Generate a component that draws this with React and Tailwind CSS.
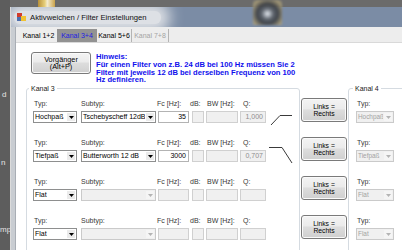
import React from "react";

const rows = [
  { typ: "Hochpaß", sub: "Tschebyscheff 12dB", fc: "35", q: "1,000", on: true, k4: "Hochpaß", link: "M5 26L14 16.5H26" },
  { typ: "Tiefpaß", sub: "Butterworth 12 dB", fc: "3000", q: "0,707", on: true, k4: "Tiefpaß", link: "M3 9.5H16L26 25" },
  { typ: "Flat", sub: "", fc: "", q: "", on: false, k4: "Flat" },
  { typ: "Flat", sub: "", fc: "", q: "", on: false, k4: "Flat" },
];

function Label({ children, className = "" }) {
  return (
    <div className={`h-[9px] whitespace-nowrap text-[7px] leading-[9px] text-[#383838] ${className}`}>
      {children}
    </div>
  );
}

function Combo({ value, on = true, className = "", text = "text-[7px]" }) {
  return (
    <div
      className={`flex h-[12px] border ${
        on ? "border-[#8e8f8f] bg-white text-black" : "border-[#cacaca] bg-[#f0f0f0] text-[#a3a3a3]"
      } ${className}`}
    >
      <span className={`flex-1 overflow-hidden whitespace-nowrap pl-[1px] leading-[10px] ${text}`}>{value}</span>
      <span className={`m-[1px] flex w-[8px] items-center justify-center ${on ? "bg-[#ebebeb]" : "bg-[#f5f5f5]"}`}>
        <svg width="5" height="3" viewBox="0 0 5 3">
          <path d="M0 0H5L2.5 3Z" fill={on ? "#000" : "#b4b4b4"} />
        </svg>
      </span>
    </div>
  );
}

function Field({ value = "", on = false }) {
  return (
    <div
      className={`mt-[3px] h-[12px] border pr-[2px] text-right text-[7px] leading-[10px] ${
        on ? "border-[#b3b3b3] bg-white text-black" : "border-[#d0d0d0] bg-[#f0f0f0] text-[#8d8d8d]"
      }`}
    >
      {value}
    </div>
  );
}

function WinButton({ children, className = "" }) {
  return (
    <div
      className={`flex shrink-0 flex-col items-center justify-center rounded-[3px] border border-[#7a7a7a] bg-[linear-gradient(#f3f3f3,#ebebeb_45%,#dddddd_50%,#cfcfcf)] text-black shadow-[inset_0_0_0_1px_#fafafa] ${className}`}
    >
      {children}
    </div>
  );
}

function FilterRow({ row }) {
  return (
    <div className="mb-[15px] flex h-[24px]">
      <div className="w-[44px] shrink-0">
        <Label className="pl-[1px]">Typ:</Label>
        <Combo value={row.typ} className="mt-[3px]" />
      </div>
      <div className="ml-[4px] w-[75px] shrink-0">
        <Label>Subtyp:</Label>
        <Combo value={row.sub} on={row.on} className="mt-[3px]" />
      </div>
      <div className="ml-[2px] w-[31px] shrink-0">
        <Label className="-ml-[1px]">Fc [Hz]:</Label>
        <Field value={row.fc} on={row.on} />
      </div>
      <div className="ml-[3px] w-[12px] shrink-0">
        <Label className="-ml-[2px]">dB:</Label>
        <Field />
      </div>
      <div className="ml-[2px] w-[32px] shrink-0">
        <Label className="pl-[1px]">BW [Hz]:</Label>
        <Field />
      </div>
      <div className="ml-[2px] w-[26px] shrink-0">
        <Label className="pl-[3px]">Q:</Label>
        <Field value={row.q} />
      </div>
      <svg width="32" height="24" className="shrink-0 overflow-visible">
        {row.link && <path d={row.link} fill="none" stroke="#3a3a3a" />}
      </svg>
    </div>
  );
}

export default function App() {
  return (
    <div className="relative flex h-[250px] w-[402px] overflow-hidden bg-[#5d5d5d] font-['Liberation_Sans',Arial,sans-serif]">
      {/* desktop icon labels, cut off by the window */}
      <div className="flex w-[10px] shrink-0 flex-col text-[8px] leading-[8px] text-[#e4e4e4]">
        <span className="mt-[91px] pl-[2px]">d</span>
        <span className="mt-[60px] pl-[1px]">n</span>
        <span className="mt-[59px]">mp</span>
      </div>

      <div className="flex min-w-0 flex-1 flex-col">
        <div className="flex h-[7px] shrink-0 bg-[#6b6b6b]">
          <div className="ml-[28px] h-full w-[17px] bg-[linear-gradient(90deg,#b8903a,#e6cf7a_40%,#f4ecd0_55%,#c9a24a)]" />
        </div>

        <div className="flex flex-1 flex-col border-l border-[#dcdcdc]">
          {/* title bar */}
          <div className="flex h-[20px] shrink-0 items-center overflow-hidden bg-[#7b8ca5]">
            <div className="ml-[3px] flex items-center rounded-[6px] bg-[#dde0e5] py-[2px] pl-[3px] pr-[14px] shadow-[0_0_14px_9px_#dde0e5]">
              <svg width="9" height="8" viewBox="0 0 9 8">
                <rect x="0" y="0" width="5" height="4" fill="#d23c2c" />
                <rect x="4" y="3" width="5" height="5" fill="#f0c231" />
                <rect x="0" y="4" width="4" height="4" fill="#4e6fae" />
              </svg>
              <span className="ml-[4px] whitespace-nowrap text-[7.7px] leading-[9px] text-[#111]">
                Aktivweichen / Filter Einstellungen
              </span>
            </div>
          </div>

          <div className="flex flex-1">
            <div className="w-[5px] shrink-0 border-r border-[#a9aeb5] bg-[#c9cdd2]" />

            <div className="flex min-w-0 flex-1 flex-col bg-[#ededed]">
              {/* tabs */}
              <div className="flex h-[15px] shrink-0 items-start pl-[4px] pt-[2px] text-[7px] leading-[13px]">
                <span className="w-[37px] text-center text-black">Kanal 1+2</span>
                <span className="w-[40px] bg-[#929292] text-center text-[#1e1ee0]">Kanal 3+4</span>
                <span className="w-[35px] border-r border-[#b4b4b4] text-center text-black">Kanal 5+6</span>
                <span className="w-[37px] border-r border-[#b4b4b4] text-center text-[#a4a4a4]">Kanal 7+8</span>
              </div>

              {/* tab page */}
              <div className="flex flex-1 flex-col border-t border-[#d9d9d9] bg-white pl-[10px] pt-[9px]">
                <div className="ml-[5px] flex items-start">
                  <WinButton className="h-[22px] w-[60px] text-[7.3px] leading-[7.5px]">
                    <span>Vorgänger</span>
                    <span>(Alt+P)</span>
                  </WinButton>
                  <div className="ml-[5px] mt-[1px] whitespace-nowrap text-[7.6px] font-bold leading-[7.75px] text-[#1010ec]">
                    Hinweis:
                    <br />
                    Für einen Filter von z.B. 24 dB bei 100 Hz müssen Sie 2
                    <br />
                    Filter mit jeweils 12 dB bei derselben Frequenz von 100
                    <br />
                    Hz definieren.
                  </div>
                </div>

                <div className="flex items-start">
                  <fieldset className="w-[274px] shrink-0 rounded-[3px] border border-[#d5dbe1]">
                    <legend className="ml-[2px] px-[2px] text-[7px] leading-[9px] text-[#222]">Kanal 3</legend>
                    <div className="pl-[6px] pt-[6px]">
                      {rows.map((row, i) => (
                        <FilterRow key={i} row={row} />
                      ))}
                    </div>
                  </fieldset>

                  <div className="flex w-[48px] shrink-0 flex-col items-center gap-[15px] pt-[14px]">
                    {rows.map((_, i) => (
                      <WinButton key={i} className="h-[24px] w-[46px] text-[6.8px] leading-[7.5px]">
                        <span>Links =</span>
                        <span>Rechts</span>
                      </WinButton>
                    ))}
                  </div>

                  <fieldset className="w-[70px] shrink-0 rounded-[3px] border border-[#d5dbe1]">
                    <legend className="ml-[4px] px-[2px] text-[7px] leading-[9px] text-[#222]">Kanal 4</legend>
                    <div className="pl-[7px] pt-[6px]">
                      {rows.map((row, i) => (
                        <div key={i} className="mb-[15px] h-[24px] w-[38px]">
                          <Label className="pl-[1px]">Typ:</Label>
                          <Combo value={row.k4} on={false} text="text-[6.4px]" className="mt-[3px]" />
                        </div>
                      ))}
                    </div>
                  </fieldset>
                </div>
              </div>
            </div>
          </div>
        </div>
      </div>

      {/* photo thumbnail from the desktop, overlapping the title bar */}
      <div className="absolute left-[253px] top-0 h-[25px] w-[29px] bg-[radial-gradient(ellipse_at_50%_55%,#eef2f7_0%,#5a5f66_30%,#3c3f44_50%,#a89c78_80%,transparent_100%)] opacity-90 blur-[1px]" />
    </div>
  );
}
